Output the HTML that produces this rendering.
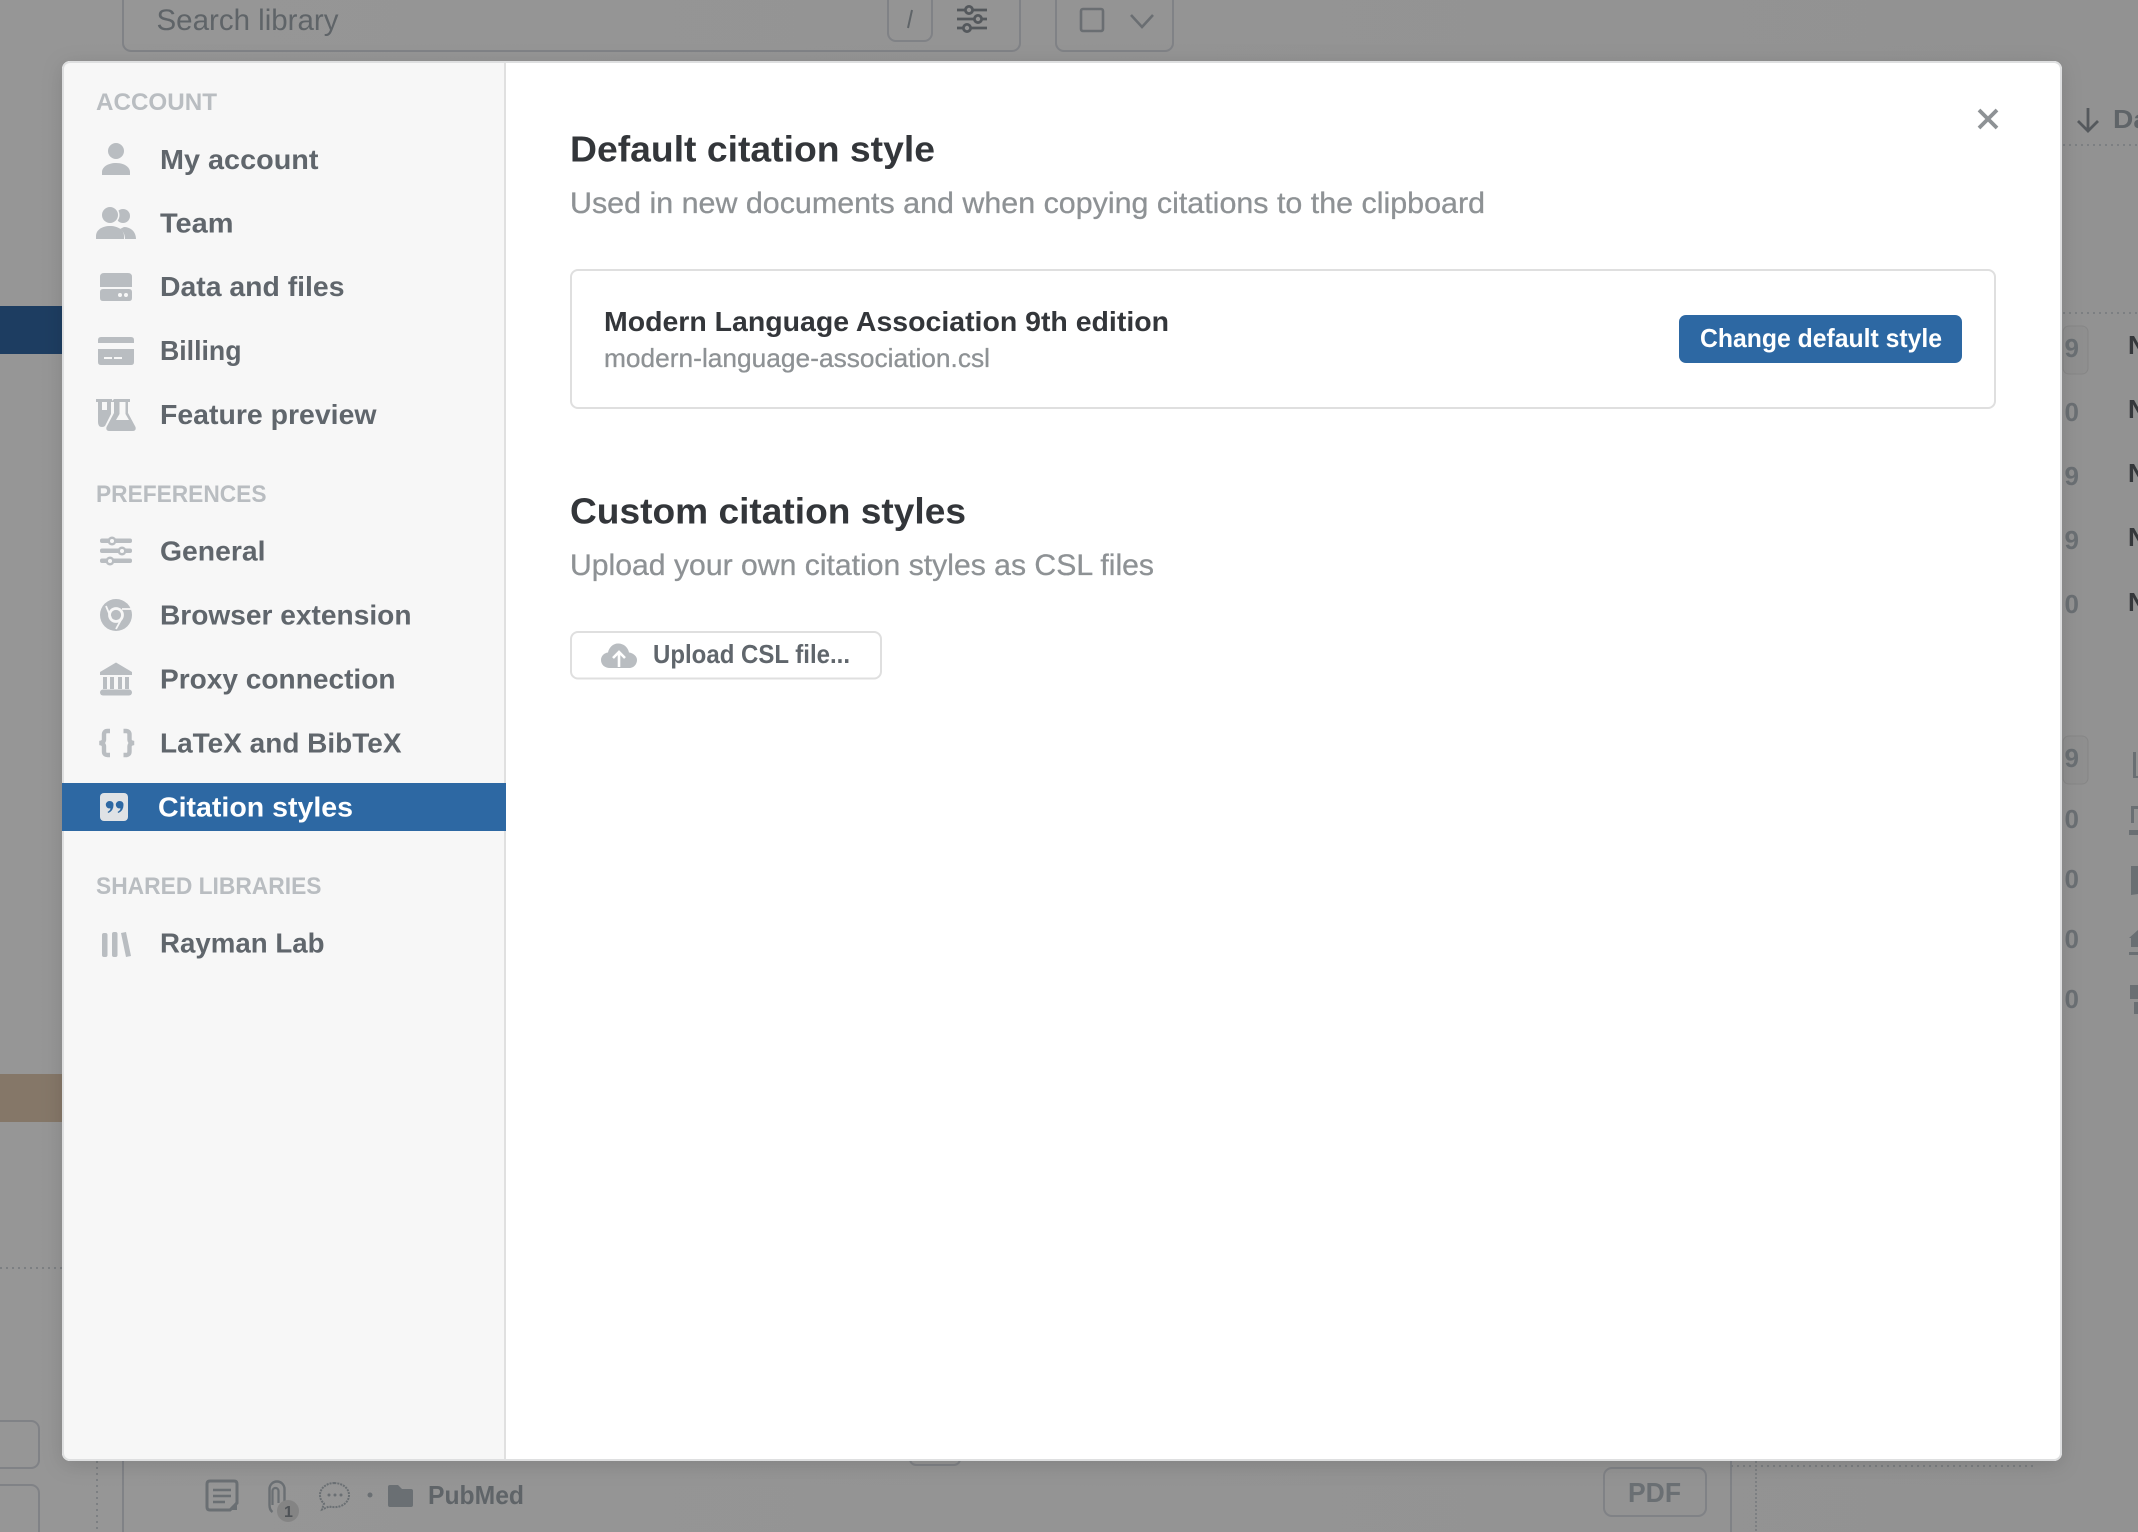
<!DOCTYPE html>
<html lang="en">
<head>
<meta charset="utf-8">
<title>Citation styles</title>
<style>
html,body{margin:0;padding:0;width:2138px;height:1532px;overflow:hidden;background:#959595}
svg{display:block;position:absolute;left:0;top:0}
text{font-family:"Liberation Sans",sans-serif}
.nav{font-size:28px;font-weight:700;fill:#60666c}
.hd{font-size:24px;font-weight:700;fill:#b9bdc1}
.ttl{font-size:36px;font-weight:700;fill:#33363a}
.sub{font-size:30px;fill:#8e9295;stroke:#8e9295;stroke-width:.3px}
.bg{fill:#5f6468}
.ln{fill:none;stroke:#808286;stroke-width:2}
.dot{fill:none;stroke:#7c7f82;stroke-width:2;stroke-dasharray:2 4}
.ic{fill:#b9bdc1}
</style>
</head>
<body>
<svg width="2138" height="1532" viewBox="0 0 2138 1532" xmlns="http://www.w3.org/2000/svg">
<defs>
<filter id="sh" x="-5%" y="-5%" width="110%" height="110%"><feDropShadow dx="0" dy="4" stdDeviation="10" flood-color="#000" flood-opacity=".13"/></filter>
<clipPath id="rnd"><rect x="62" y="61" width="2000" height="1400" rx="8"/></clipPath>
<linearGradient id="bgg" x1="0" x2="1" y1="0" y2="0"><stop offset="0" stop-color="#969696"/><stop offset="1" stop-color="#929292"/></linearGradient>
</defs>

<!-- dimmed background -->
<rect width="2138" height="1532" fill="url(#bgg)"/>
<rect x="0" y="306" width="62" height="48" fill="#1d3d61"/>
<rect x="0" y="1074" width="62" height="48" fill="#857768"/>
<line x1="0" y1="1268" x2="62" y2="1268" class="dot"/>

<rect x="123" y="-20" width="897" height="71" rx="8" class="ln"/>
<text x="156.500" y="30" font-size="30" class="bg" textLength="182" lengthAdjust="spacingAndGlyphs">Search library</text>
<rect x="888" y="-20" width="44" height="61" rx="8" class="ln"/>
<path d="M912 10l-4 18" stroke="#5f6468" stroke-width="2" fill="none"/>
<g stroke="#54585c" stroke-width="2.800" fill="#959595">
<path d="M957 10h30M957 19h30M957 28h30" fill="none"/>
<circle cx="969" cy="10" r="3.600"/><circle cx="978" cy="19" r="3.600"/><circle cx="967" cy="28" r="3.600"/>
</g>
<rect x="1056" y="-20" width="117" height="71" rx="8" class="ln"/>
<rect x="1081" y="9" width="22" height="22" rx="2" fill="none" stroke="#6a6e72" stroke-width="2.600"/>
<path d="M1131 15l11 12 11-12" fill="none" stroke="#6a6e72" stroke-width="2.600"/>

<!-- right column -->
<path d="M2088 108v23M2078 121l10 10 10-10" fill="none" stroke="#55595d" stroke-width="2.800"/>
<text x="2113" y="128" font-size="26" font-weight="700" class="bg" textLength="36" lengthAdjust="spacingAndGlyphs">Da</text>
<line x1="2063" y1="145" x2="2138" y2="145" class="dot"/>
<line x1="2063" y1="313" x2="2138" y2="313" class="dot"/>
<rect x="2063" y="326" width="25" height="48" rx="6" fill="#8f8f8f" stroke="#868686" stroke-width="1"/>
<rect x="2063" y="736" width="25" height="48" rx="6" fill="#8f8f8f" stroke="#868686" stroke-width="1"/>
<g font-size="26" font-weight="700" fill="#6a6f73">
<text x="2064.500" y="357">9</text><text x="2064.500" y="421">0</text><text x="2064.500" y="485">9</text><text x="2064.500" y="549">9</text><text x="2064.500" y="613">0</text>
<text x="2064.500" y="767">9</text><text x="2064.500" y="828">0</text><text x="2064.500" y="888">0</text><text x="2064.500" y="948">0</text><text x="2064.500" y="1008">0</text>
</g>
<g font-size="26" font-weight="700" fill="#35383b">
<text x="2128" y="354">N</text><text x="2128" y="418">N</text><text x="2128" y="482">N</text><text x="2128" y="546">N</text><text x="2128" y="611">N</text>
</g>
<g fill="#6a6f73">
<path d="M2133 752v26h5v-2h-2v-24z"/>
<path d="M2131 806h7v3h-4v14h-3zM2129 830h9v5h-9z"/>
<path d="M2131 866h7v28l-7 1z"/>
<path d="M2129 938l9-8v8zM2131 938h7v9h-7zM2129 952h9v3h-9z"/>
<path d="M2130 985h8v14h-8zM2134 1002h4v12h-4z"/>
</g>

<!-- bottom background -->
<rect x="-10" y="1421" width="49" height="47" rx="8" class="ln"/>
<rect x="-10" y="1485" width="49" height="60" rx="8" class="ln"/>
<line x1="97" y1="1461" x2="97" y2="1532" class="dot"/>
<line x1="123" y1="1461" x2="123" y2="1532" class="ln"/>
<rect x="910" y="1440" width="50" height="25" rx="6" class="ln"/>
<g fill="none" stroke="#6a6f73" stroke-width="3">
<path d="M210 1481h24q3 0 3 3v19l-7 7h-20q-3 0-3-3v-23q0-3 3-3z"/>
<path d="M213 1490h18M213 1496h18M213 1502h12" stroke-width="2.600"/>
<path d="M284.500 1502V1489a7.500 7.500 0 0 0-15 0V1505q0 5 3 7" stroke-width="2.400"/>
<path d="M278.500 1503V1491a3 3 0 0 0-6 0v14" stroke-width="2.200"/>
</g>
<path d="M237 1500v10h-7z" fill="#6a6f73"/>
<circle cx="288" cy="1511" r="11" fill="#848484"/>
<text x="284" y="1517" font-size="16" font-weight="700" fill="#4f5357">1</text>
<path d="M334.500 1483c-8.500 0-14.500 5.500-14.500 12 0 3.500 1.500 6.500 4 8.500l-2 6 7-3c2 .5 3.500 .6 5.500 .6 8.500 0 14.500-5.500 14.500-12s-6-12-14.500-12z" fill="none" stroke="#6a6f73" stroke-width="2" stroke-dasharray="2 1"/>
<circle cx="329" cy="1495" r="1.500" fill="#6a6f73"/><circle cx="335" cy="1495" r="1.500" fill="#6a6f73"/><circle cx="341" cy="1495" r="1.500" fill="#6a6f73"/>
<circle cx="370" cy="1495" r="2.500" fill="#6a6f73"/>
<path d="M388 1487q0-2 2-2h8l4 4h9q2 0 2 2v14q0 2-2 2h-21q-2 0-2-2z" fill="#6a6f73"/>
<text x="428" y="1504" font-size="26" font-weight="700" class="bg" textLength="96" lengthAdjust="spacingAndGlyphs">PubMed</text>
<rect x="1604" y="1468" width="102" height="48" rx="8" class="ln"/>
<text x="1628" y="1502" font-size="28" font-weight="700" fill="#6a6f73" textLength="53" lengthAdjust="spacingAndGlyphs">PDF</text>
<line x1="1731" y1="1461" x2="1731" y2="1532" class="ln"/>
<line x1="1756" y1="1461" x2="1756" y2="1532" stroke="#7c7f82" stroke-width="2" stroke-dasharray="2 2"/>
<line x1="1731" y1="1466" x2="2036" y2="1466" class="dot"/>

<!-- modal -->
<rect x="62" y="61" width="2000" height="1400" rx="8" fill="#fff" filter="url(#sh)"/>
<g clip-path="url(#rnd)">
<rect x="62" y="61" width="443" height="1400" fill="#f7f7f7"/>
<rect x="504" y="61" width="2" height="1400" fill="#e0e0e0"/>
</g>
<rect x="63" y="62" width="1998" height="1398" rx="7" fill="none" stroke="#dedfe0" stroke-width="2"/>
<rect x="62" y="783" width="444" height="48" fill="#2d68a3"/>

<!-- sidebar text -->
<text x="96" y="110" class="hd" textLength="121" lengthAdjust="spacingAndGlyphs">ACCOUNT</text>
<text x="160" y="169" class="nav" textLength="158.500" lengthAdjust="spacingAndGlyphs">My account</text>
<text x="160" y="232.500" class="nav" textLength="73.500" lengthAdjust="spacingAndGlyphs">Team</text>
<text x="160" y="296" class="nav" textLength="184.500" lengthAdjust="spacingAndGlyphs">Data and files</text>
<text x="160" y="360" class="nav" textLength="81.500" lengthAdjust="spacingAndGlyphs">Billing</text>
<text x="160" y="424" class="nav" textLength="216.500" lengthAdjust="spacingAndGlyphs">Feature preview</text>
<text x="96" y="502" class="hd" textLength="170.500" lengthAdjust="spacingAndGlyphs">PREFERENCES</text>
<text x="160" y="560.500" class="nav" textLength="105.500" lengthAdjust="spacingAndGlyphs">General</text>
<text x="160" y="624.500" class="nav" textLength="251.500" lengthAdjust="spacingAndGlyphs">Browser extension</text>
<text x="160" y="688.500" class="nav" textLength="235.500" lengthAdjust="spacingAndGlyphs">Proxy connection</text>
<text x="160" y="752.500" class="nav" textLength="241.500" lengthAdjust="spacingAndGlyphs">LaTeX and BibTeX</text>
<text x="158" y="816.500" class="nav" style="fill:#fff" textLength="195" lengthAdjust="spacingAndGlyphs">Citation styles</text>
<text x="96" y="894" class="hd" textLength="225.500" lengthAdjust="spacingAndGlyphs">SHARED LIBRARIES</text>
<text x="160" y="952.500" class="nav" textLength="164.500" lengthAdjust="spacingAndGlyphs">Rayman Lab</text>

<!-- sidebar icons -->
<g class="ic">
<circle cx="116" cy="151" r="8"/>
<path d="M102 175v-3c0-5 6-9 14-9s14 4 14 9v3z"/>

<circle cx="123" cy="216" r="7"/>
<path d="M124 227c7 0 12 5 12 12h-11c0-5-2-8-5-10z"/>
<circle cx="110" cy="215" r="9.500" fill="#f7f7f7"/>
<circle cx="110" cy="215" r="8"/>
<path d="M96 239v-3c0-6 6-10 14-10s14 4 14 10v3z"/>

<path d="M104 273h24q4 0 4 4v10h-32v-10q0-4 4-4z"/>
<path d="M103 289h26q3 0 3 3v6q0 3-3 3h-26q-3 0-3-3v-6q0-3 3-3z"/>

<path d="M101 337h30q3 0 3 3v3h-36v-3q0-3 3-3z"/>
<path d="M98 349h36v13q0 3-3 3h-30q-3 0-3-3z"/>

<path d="M96 399h16v3h-1v12l-6 12q-1 1-3 1q-4 0-4-5v-20h-2zM102 402v8h5v-8z" fill-rule="evenodd"/>
<path d="M114 399h16v3h-2v11l7.500 14q1 4-3 4h-23q-4 0-3-4l7.500-14v-11h-3zM119.500 402v12l-3.500 6h13l-3.500-6v-12z" fill-rule="evenodd"/>
</g>
<g fill="#f7f7f7">
<circle cx="120" cy="295" r="2"/><circle cx="126" cy="295" r="2"/>
<rect x="104" y="357" width="8" height="2"/><rect x="114" y="357" width="8" height="2"/>
</g>

<g class="ic">
<rect x="100" y="538.500" width="32" height="4.500" rx="2"/>
<rect x="100" y="548.500" width="32" height="4.500" rx="2"/>
<rect x="100" y="558.500" width="32" height="4.500" rx="2"/>
<circle cx="112" cy="541" r="4.500"/><circle cx="122" cy="551" r="4.500"/><circle cx="110" cy="561" r="4.500"/>
</g>
<g fill="#f7f7f7"><circle cx="112" cy="541" r="2"/><circle cx="122" cy="551" r="2"/><circle cx="110" cy="561" r="2"/></g>

<circle cx="116" cy="615" r="16" class="ic"/>
<circle cx="116" cy="615" r="6.500" fill="none" stroke="#f7f7f7" stroke-width="2.800"/>
<path d="M106 606l5 12M122 609h9M122 618l-6 11" stroke="#f7f7f7" stroke-width="1.800" fill="none"/>

<g class="ic">
<path d="M116 662.500l16 9.500v3h-32v-3z"/>
<rect x="103" y="677" width="4" height="12"/><rect x="110" y="677" width="4" height="12"/><rect x="118" y="677" width="4" height="12"/><rect x="125" y="677" width="4" height="12"/>
<rect x="100" y="689.500" width="32" height="6" rx="3"/>
</g>
<path d="M110 731h-2.500q-3.500 0-3.500 3.500v5q0 3-4.500 3.500q4.500 .5 4.500 3.500v5q0 3.500 3.500 3.500h2.500M123.500 731h2.500q3.500 0 3.500 3.500v5q0 3 4.500 3.500q-4.500 .5-4.500 3.500v5q0 3.500-3.500 3.500h-2.500" fill="none" stroke="#b9bdc1" stroke-width="4.400"/>

<rect x="100" y="793" width="28" height="28" rx="4" fill="#dfe2e5"/>
<path d="M109.500 801a3.700 3.700 0 1 0 0 7.400h1q0 2-3 3.600l1 1q5-2.500 5-8q0-4-4-4zM119.500 801a3.700 3.700 0 1 0 0 7.400h1q0 2-3 3.600l1 1q5-2.500 5-8q0-4-4-4z" fill="#2d68a3"/>

<g class="ic">
<rect x="102" y="933" width="5.500" height="24" rx="2"/>
<rect x="112" y="932" width="5.500" height="25" rx="2"/>
<path d="M121 933l5-1 5 24-5 1z"/>
</g>

<!-- main content -->
<path d="M1979 110l18 18M1997 110l-18 18" stroke="#8e9295" stroke-width="3.800" fill="none"/>
<text x="570" y="161.500" class="ttl" textLength="365" lengthAdjust="spacingAndGlyphs">Default citation style</text>
<text x="570" y="213" class="sub" textLength="915" lengthAdjust="spacingAndGlyphs">Used in new documents and when copying citations to the clipboard</text>
<rect x="571" y="270" width="1424" height="138" rx="7" fill="#fff" stroke="#dfdfdf" stroke-width="2"/>
<text x="604" y="331" font-size="28" font-weight="700" fill="#33363a" textLength="565" lengthAdjust="spacingAndGlyphs">Modern Language Association 9th edition</text>
<text x="604" y="367" font-size="26" fill="#8e9295" stroke="#8e9295" stroke-width=".3" textLength="386" lengthAdjust="spacingAndGlyphs">modern-language-association.csl</text>
<rect x="1679" y="315" width="283" height="48" rx="7" fill="#2d68a3"/>
<text x="1700" y="347" font-size="26" font-weight="700" fill="#fff" textLength="242" lengthAdjust="spacingAndGlyphs">Change default style</text>
<text x="570" y="523.500" class="ttl" textLength="396" lengthAdjust="spacingAndGlyphs">Custom citation styles</text>
<text x="570" y="575" class="sub" textLength="584" lengthAdjust="spacingAndGlyphs">Upload your own citation styles as CSL files</text>
<rect x="571" y="632" width="310" height="46.500" rx="7" fill="#fff" stroke="#dfdfdf" stroke-width="2"/>
<path d="M610 668c-5.500 0-9-3.500-9-8 0-4 3-7 7-7.500 1-5 5-9 10-9 6 0 10 4 11 9 4 .5 8 3.500 8 7.500 0 4.500-3.500 8-8 8z" fill="#b9bdc1"/>
<path d="M619 667v-14M613 658l6-6 6 6" fill="none" stroke="#fff" stroke-width="2.600"/>
<text x="653" y="663" font-size="26" font-weight="700" fill="#60666c" textLength="197" lengthAdjust="spacingAndGlyphs">Upload CSL file...</text>
</svg>
</body>
</html>
